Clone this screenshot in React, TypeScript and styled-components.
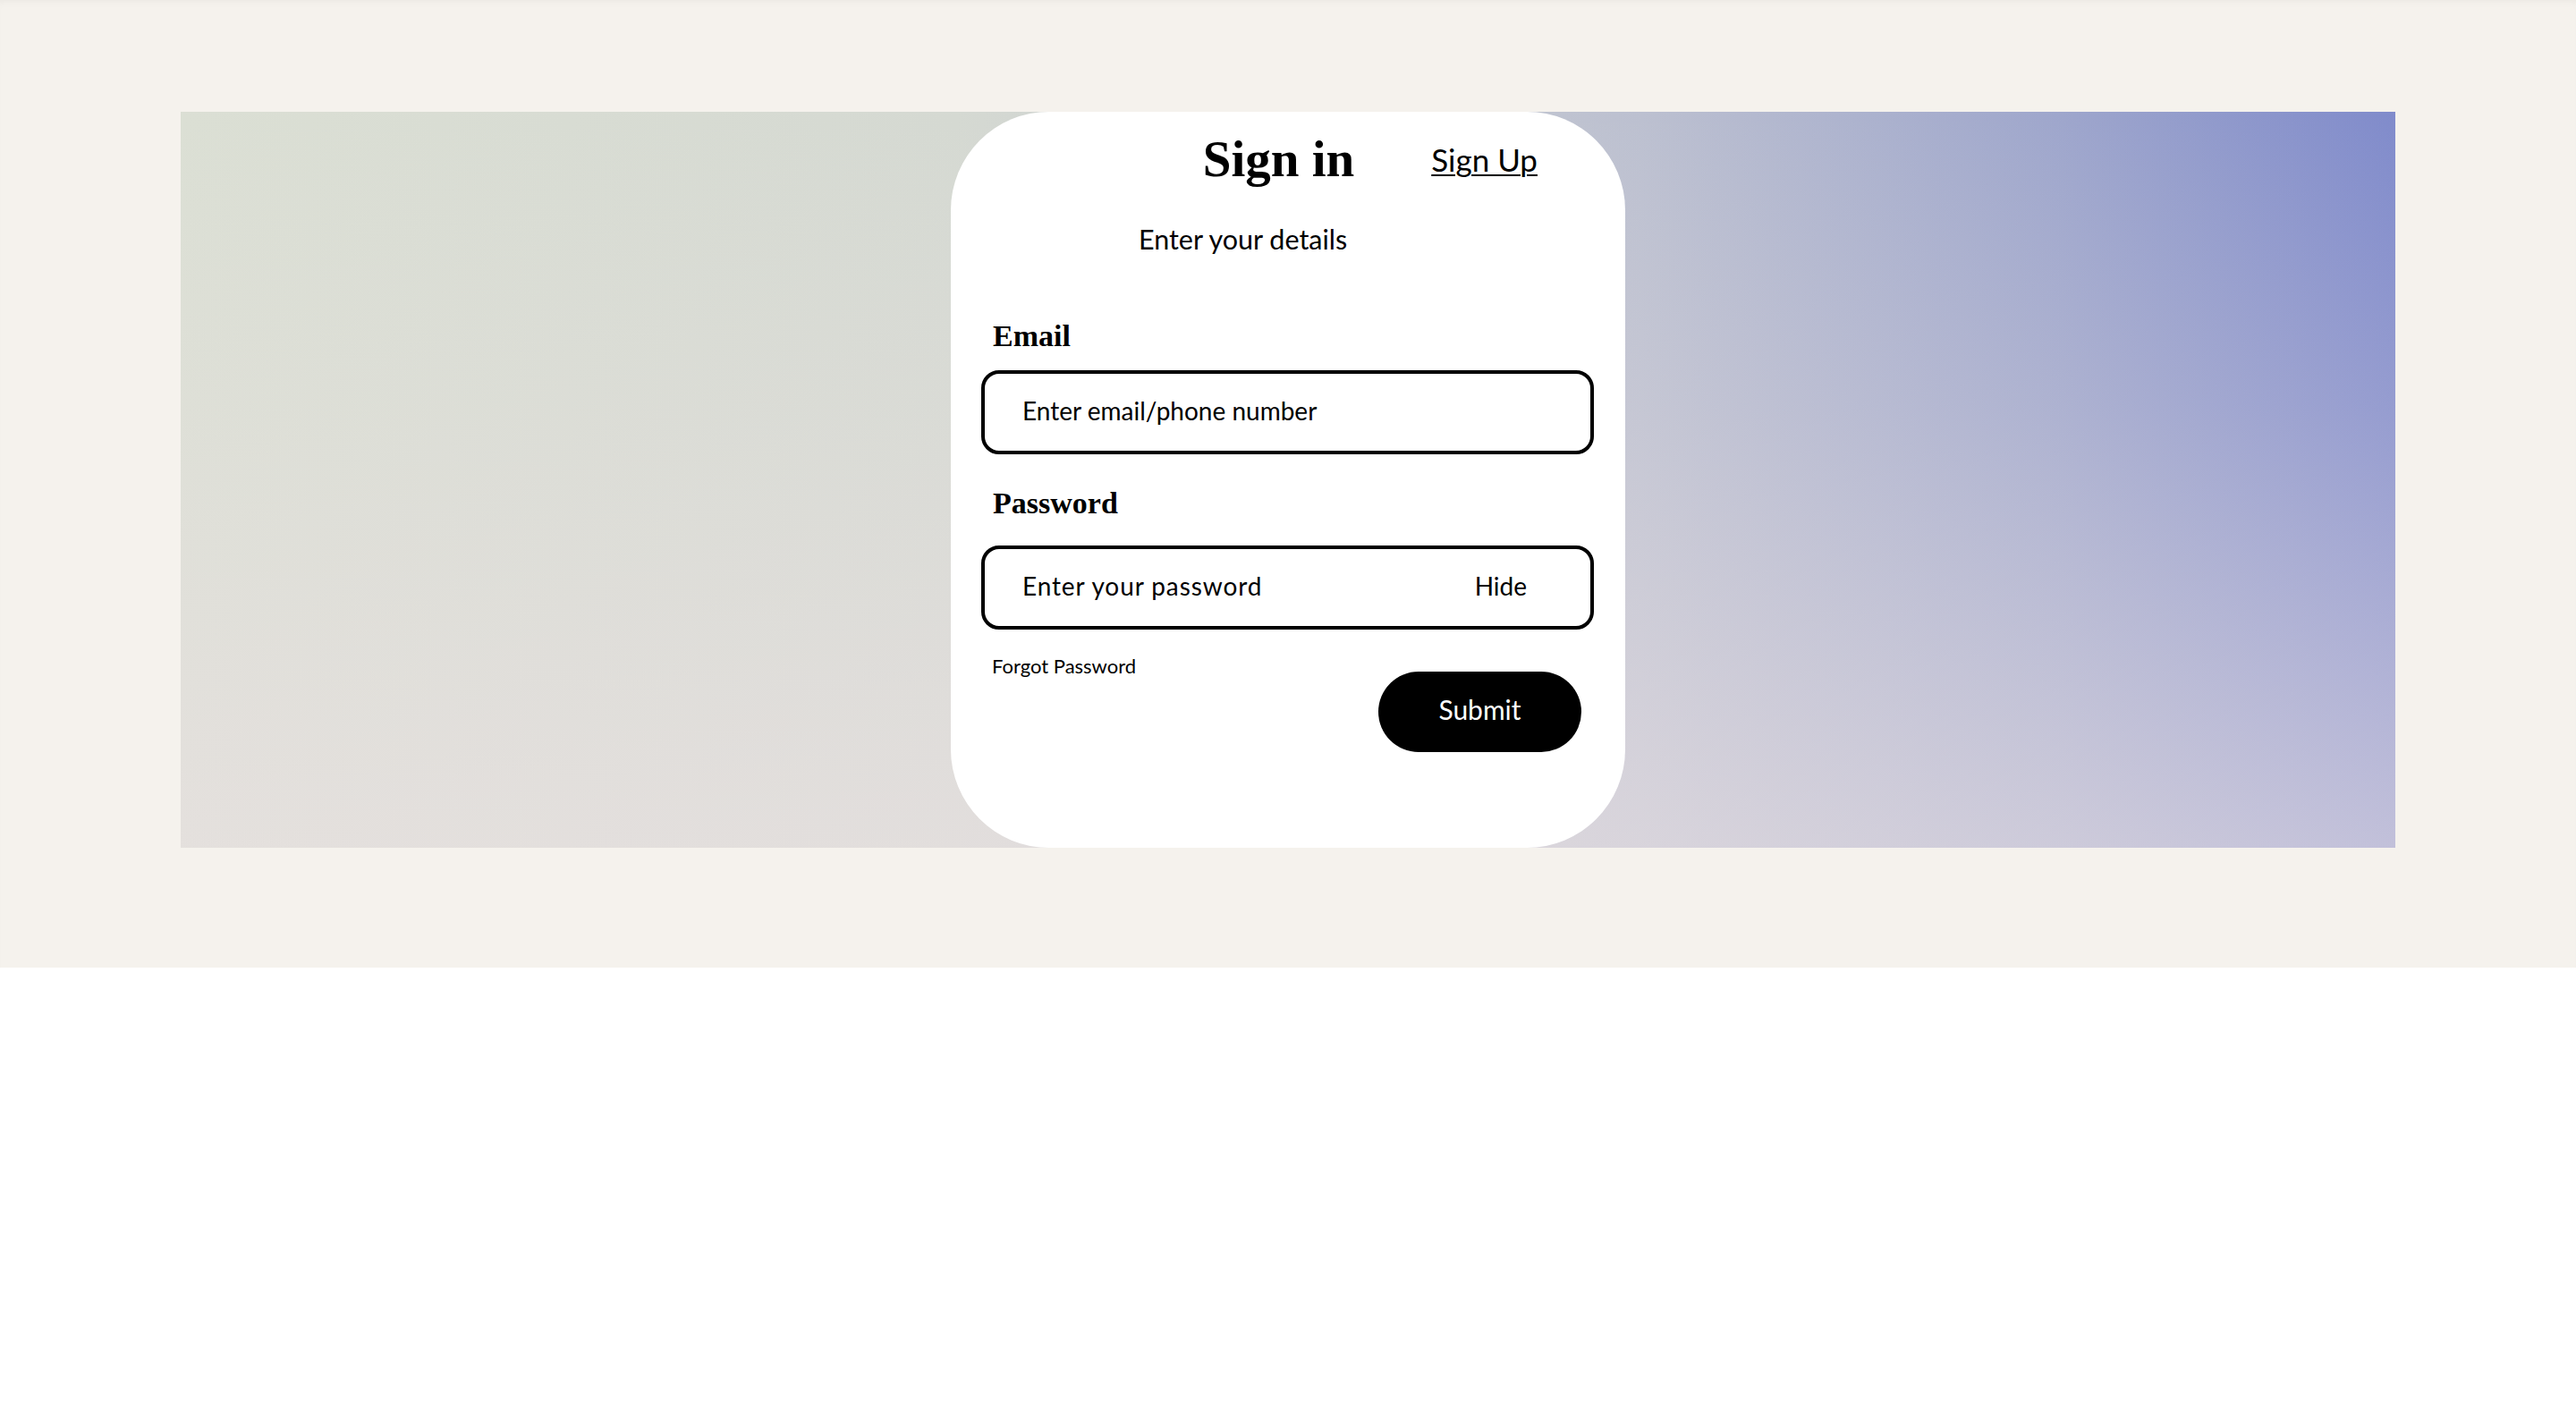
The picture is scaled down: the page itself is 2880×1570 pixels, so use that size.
import styled, { createGlobalStyle } from "styled-components"

const GlobalStyle = createGlobalStyle`
	html, body {
		margin: 0;
		padding: 0;
		background: #ffffff;
	}
	body {
		font-family: "Lato", "Liberation Sans", sans-serif;
		color: #000;
	}
	* {
		box-sizing: border-box;
	}
`

const Hero = styled.section`
	background: #f5f2ed;
	padding: 125px 202px 134px;
	box-shadow: inset 0 7px 10px -6px rgba(0, 0, 0, 0.05);
`

const Banner = styled.div`
	height: 823px;
	display: flex;
	justify-content: center;
	background:
		linear-gradient(to bottom, rgba(234, 225, 227, 0) 0%, rgba(234, 225, 227, 0.2) 40%, rgba(234, 225, 227, 0.62) 100%),
		linear-gradient(
			to right,
			#dbdfd4 0%,
			#d5d9d2 35%,
			#bcc0d0 66%,
			#9ea6cc 85%,
			#808bcb 100%
		);
`

const Card = styled.div`
	width: 754px;
	height: 100%;
	background: #ffffff;
	border-radius: 110px;
	padding: 25px 35px 0 34px;
	display: flex;
	flex-direction: column;
`

const Header = styled.div`
	display: flex;
	align-items: center;
	justify-content: flex-end;
	gap: 86px;
	padding-right: 63px;
`

const Title = styled.h1`
	margin: 0;
	font-family: "Liberation Serif", "Times New Roman", serif;
	font-weight: 700;
	font-size: 57px;
	line-height: 56px;
`

const SignUpLink = styled.a`
	font-size: 35px;
	line-height: 42px;
	color: #000;
	text-decoration: underline;
	text-decoration-thickness: 2px;
	text-underline-offset: 3px;
	cursor: pointer;
`

const Subtitle = styled.p`
	margin: 43px 0 0 176px;
	font-size: 30.5px;
	line-height: 36px;
`

const Label = styled.label<{ gap: number; top: number }>`
	display: block;
	margin: ${(p) => p.top}px 0 ${(p) => p.gap}px 13px;
	font-family: "Liberation Serif", "Times New Roman", serif;
	font-weight: 700;
	font-size: 34px;
	line-height: 34px;
`

const Field = styled.div`
	height: 94px;
	border: 4px solid #000;
	border-radius: 20px;
	display: flex;
	align-items: center;
	padding: 0 71px 5px 42px;
`

const Input = styled.input<{ spacing?: number }>`
	flex: 1;
	min-width: 0;
	border: none;
	outline: none;
	background: transparent;
	padding: 0;
	font-family: "Lato", "Liberation Sans", sans-serif;
	font-size: 28px;
	letter-spacing: ${(p) => p.spacing ?? 0}px;
	color: #000;

	&::placeholder {
		color: #000;
		opacity: 1;
	}
`

const HideToggle = styled.button`
	border: none;
	background: none;
	padding: 0;
	font-family: "Lato", "Liberation Sans", sans-serif;
	font-size: 28px;
	color: #000;
	cursor: pointer;
`

const Actions = styled.div`
	margin-top: 29px;
	display: flex;
	justify-content: space-between;
	align-items: flex-start;
`

const ForgotLink = styled.a`
	margin-left: 12px;
	font-size: 22px;
	line-height: 24px;
	color: #000;
	cursor: pointer;
`

const SubmitButton = styled.button`
	margin: 18px 14px 0 0;
	width: 227px;
	height: 90px;
	border: none;
	border-radius: 45px;
	background: #000;
	color: #fff;
	font-family: "Lato", "Liberation Sans", sans-serif;
	font-size: 30px;
	padding: 0 0 6px;
	cursor: pointer;
`

const App = () => {
	return (
		<>
			<GlobalStyle />
			<Hero>
				<Banner>
					<Card>
						<Header>
							<Title>Sign in</Title>
							<SignUpLink>Sign Up</SignUpLink>
						</Header>
						<Subtitle>Enter your details</Subtitle>

						<Label top={74} gap={21} htmlFor="email">
							Email
						</Label>
						<Field>
							<Input id="email" type="text" placeholder="Enter email/phone number" />
						</Field>

						<Label top={38} gap={30} htmlFor="password">
							Password
						</Label>
						<Field>
							<Input id="password" type="password" spacing={0.9} placeholder="Enter your password" />
							<HideToggle type="button">Hide</HideToggle>
						</Field>

						<Actions>
							<ForgotLink>Forgot Password</ForgotLink>
							<SubmitButton type="submit">Submit</SubmitButton>
						</Actions>
					</Card>
				</Banner>
			</Hero>
		</>
	)
}

export default App
